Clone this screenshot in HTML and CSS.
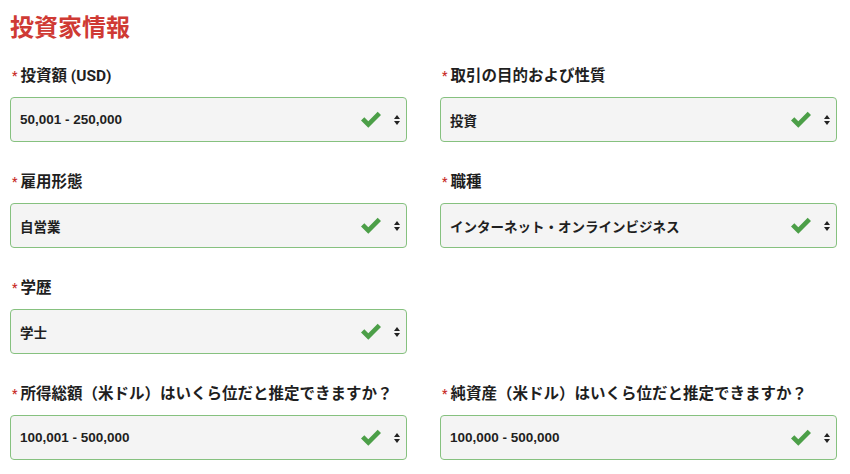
FILE: index.html
```html
<!DOCTYPE html>
<html lang="ja">
<head>
<meta charset="utf-8">
<title>投資家情報</title>
<link rel="stylesheet" href="styles.css">
</head>
<body>
<div class="page">
  <h1 class="title">投資家情報</h1>
  <div class="grid">
    <div class="field">
      <div class="label"><span class="req">*</span>投資額 (USD)</div>
      <div class="select"><span class="value">50,001 - 250,000</span>
        <svg class="check" viewBox="0 0 22 17"><path d="M1 9.5 L4.3 6.2 L8.3 10.2 L17.7 0.8 L21 4.1 L8.3 16.8 Z"/></svg>
        <svg class="arrows" viewBox="0 0 6 10"><path d="M3 0 L6 4 L0 4 Z M0 6 L6 6 L3 10 Z"/></svg>
      </div>
    </div>
    <div class="field">
      <div class="label"><span class="req">*</span>取引の目的および性質</div>
      <div class="select"><span class="value">投資</span>
        <svg class="check" viewBox="0 0 22 17"><path d="M1 9.5 L4.3 6.2 L8.3 10.2 L17.7 0.8 L21 4.1 L8.3 16.8 Z"/></svg>
        <svg class="arrows" viewBox="0 0 6 10"><path d="M3 0 L6 4 L0 4 Z M0 6 L6 6 L3 10 Z"/></svg>
      </div>
    </div>
    <div class="field">
      <div class="label"><span class="req">*</span>雇用形態</div>
      <div class="select"><span class="value">自営業</span>
        <svg class="check" viewBox="0 0 22 17"><path d="M1 9.5 L4.3 6.2 L8.3 10.2 L17.7 0.8 L21 4.1 L8.3 16.8 Z"/></svg>
        <svg class="arrows" viewBox="0 0 6 10"><path d="M3 0 L6 4 L0 4 Z M0 6 L6 6 L3 10 Z"/></svg>
      </div>
    </div>
    <div class="field">
      <div class="label"><span class="req">*</span>職種</div>
      <div class="select"><span class="value">インターネット・オンラインビジネス</span>
        <svg class="check" viewBox="0 0 22 17"><path d="M1 9.5 L4.3 6.2 L8.3 10.2 L17.7 0.8 L21 4.1 L8.3 16.8 Z"/></svg>
        <svg class="arrows" viewBox="0 0 6 10"><path d="M3 0 L6 4 L0 4 Z M0 6 L6 6 L3 10 Z"/></svg>
      </div>
    </div>
    <div class="field">
      <div class="label"><span class="req">*</span>学歴</div>
      <div class="select"><span class="value">学士</span>
        <svg class="check" viewBox="0 0 22 17"><path d="M1 9.5 L4.3 6.2 L8.3 10.2 L17.7 0.8 L21 4.1 L8.3 16.8 Z"/></svg>
        <svg class="arrows" viewBox="0 0 6 10"><path d="M3 0 L6 4 L0 4 Z M0 6 L6 6 L3 10 Z"/></svg>
      </div>
    </div>
    <div class="field empty"></div>
    <div class="field">
      <div class="label"><span class="req">*</span>所得総額（米ドル）はいくら位だと推定できますか？</div>
      <div class="select"><span class="value">100,001 - 500,000</span>
        <svg class="check" viewBox="0 0 22 17"><path d="M1 9.5 L4.3 6.2 L8.3 10.2 L17.7 0.8 L21 4.1 L8.3 16.8 Z"/></svg>
        <svg class="arrows" viewBox="0 0 6 10"><path d="M3 0 L6 4 L0 4 Z M0 6 L6 6 L3 10 Z"/></svg>
      </div>
    </div>
    <div class="field">
      <div class="label"><span class="req">*</span>純資産（米ドル）はいくら位だと推定できますか？</div>
      <div class="select"><span class="value">100,000 - 500,000</span>
        <svg class="check" viewBox="0 0 22 17"><path d="M1 9.5 L4.3 6.2 L8.3 10.2 L17.7 0.8 L21 4.1 L8.3 16.8 Z"/></svg>
        <svg class="arrows" viewBox="0 0 6 10"><path d="M3 0 L6 4 L0 4 Z M0 6 L6 6 L3 10 Z"/></svg>
      </div>
    </div>
  </div>
</div>
</body>
</html>
```

FILE: styles.css
```css
html, body {
  margin: 0;
  padding: 0;
  background: #ffffff;
}
body {
  font-family: "Roboto", "Noto Sans CJK JP", sans-serif;
  color: #222222;
}
.page {
  padding: 10px 13px 0 10px;
}
.title {
  margin: 0;
  font-family: "Noto Sans CJK JP", sans-serif;
  font-size: 24px;
  line-height: 32px;
  font-weight: 700;
  color: #cf3a34;
}
.grid {
  margin-top: 23px;
  display: grid;
  grid-template-columns: 397px 397px;
  column-gap: 33px;
  row-gap: 29px;
}
.label {
  font-family: "Roboto", "Noto Sans CJK JP", sans-serif;
  font-size: 15.5px;
  font-weight: 700;
  line-height: 22px;
  height: 22px;
  color: #1f1f1f;
  white-space: nowrap;
}
.req {
  color: #c9302c;
  font-size: 12px;
  line-height: 0;
  margin: 0 3px 0 2px;
  vertical-align: 1px;
}
.select {
  margin-top: 10px;
  height: 45px;
  box-sizing: border-box;
  border: 1.5px solid #86c17f;
  border-radius: 4px;
  background: #f4f4f4;
  display: flex;
  align-items: center;
  padding: 0 6px 0 9px;
}
.value {
  flex: 1;
  font-family: "Liberation Sans", "Noto Sans CJK JP", sans-serif;
  font-size: 13.5px;
  font-weight: 700;
  color: #1f1f1f;
  white-space: nowrap;
}
.check {
  width: 22px;
  height: 17px;
  fill: #4c9f48;
  margin-right: 12px;
}
.arrows {
  width: 6px;
  height: 10px;
  fill: #222222;
}
```
